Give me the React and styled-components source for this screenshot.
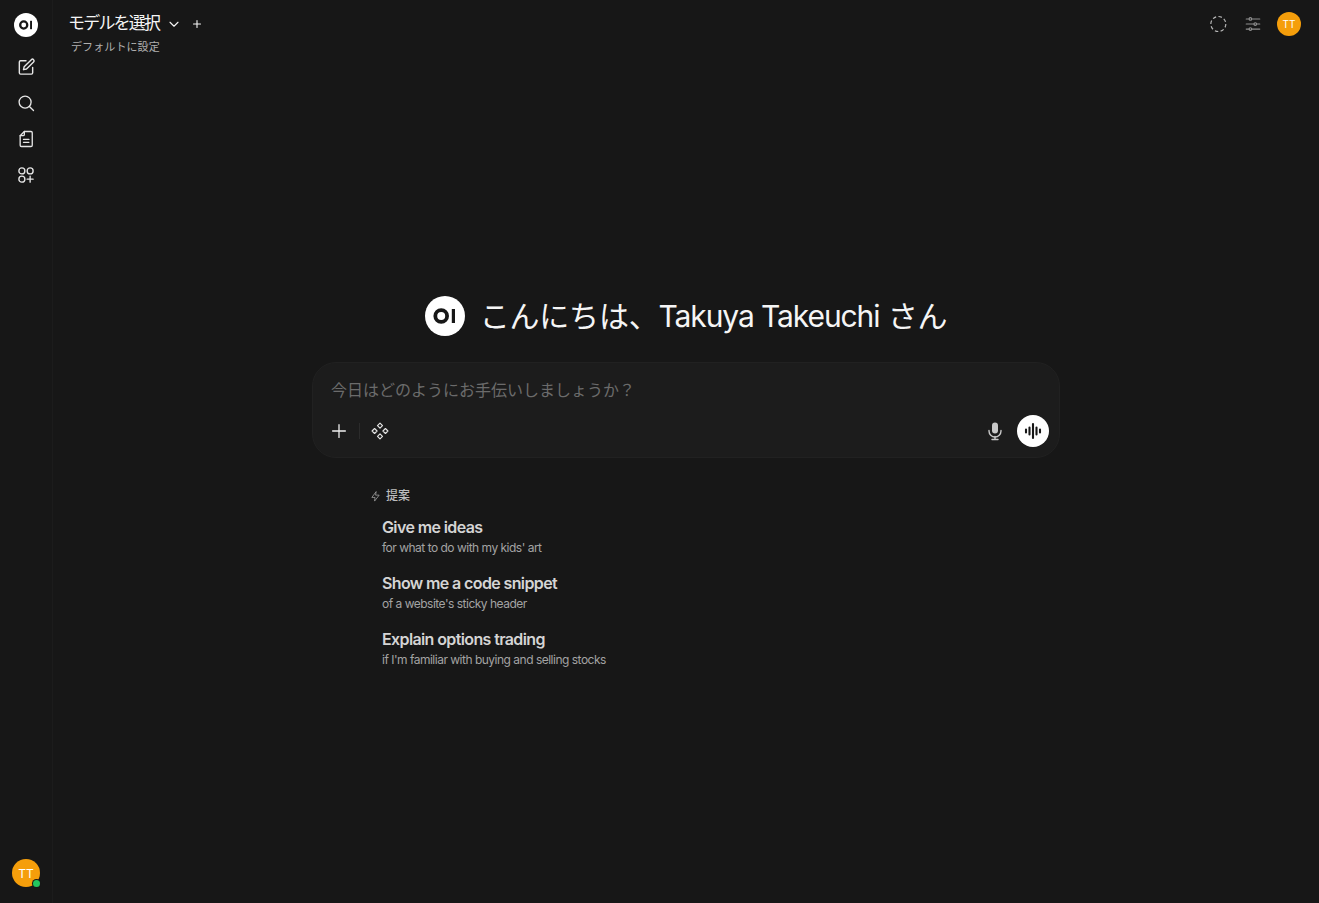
import React from 'react'
import styled, { createGlobalStyle } from 'styled-components'

const Global = createGlobalStyle`
  html, body { margin: 0; padding: 0; height: 100%; background: #171717; }
  body { font-family: Inter, "Noto Sans CJK JP", sans-serif; color: #ececec; overflow: hidden; }
  * { box-sizing: border-box; }
`

const Logo = ({ size }) => (
  <svg width={size} height={size} viewBox="0 0 40 40">
    <circle cx="20" cy="20" r="20" fill="#fff" />
    <circle cx="16.200" cy="20" r="5.900" fill="none" stroke="#171717" strokeWidth="3.800" />
    <rect x="26.800" y="13" width="3.200" height="14" fill="#171717" />
  </svg>
)

const Icon = ({ size = 18, sw = 1.5, children, color = 'currentColor' }) => (
  <svg width={size} height={size} viewBox="0 0 24 24" fill="none" stroke={color} strokeWidth={sw} strokeLinecap="round" strokeLinejoin="round">
    {children}
  </svg>
)

export default function App() {
  const suggestions = [
    ['Give me ideas', "for what to do with my kids' art"],
    ['Show me a code snippet', "of a website's sticky header"],
    ['Explain options trading', "if I'm familiar with buying and selling stocks"],
  ]
  return (
    <Page>
      <Global />
      <Sidebar>
        <SideTop>
          <SideLogo><Logo size={24} /></SideLogo>
          <SideButton>
            <Icon size={20} sw={1.700}>
              <path d="M12 4.500H5.500A1.500 1.500 0 0 0 4 6v13a1.500 1.500 0 0 0 1.500 1.500h13A1.500 1.500 0 0 0 20 19v-6.500" />
              <path d="M18.400 3.200a1.900 1.900 0 0 1 2.700 2.700L12.600 14.400 9 15.200l.8-3.600z" />
            </Icon>
          </SideButton>
          <SideButton>
            <Icon size={18} sw={1.800}>
              <circle cx="10.800" cy="10.800" r="8" />
              <path d="M16.600 16.600L22 22" />
            </Icon>
          </SideButton>
          <SideButton>
            <Icon size={20} sw={1.600}>
              <path d="M10 3h8a1.500 1.500 0 0 1 1.500 1.500v15A1.500 1.500 0 0 1 18 21H6.500A1.500 1.500 0 0 1 5 19.500V8z" />
              <path d="M10 3v3.500A1.500 1.500 0 0 1 8.500 8H5" />
              <path d="M9 12.500h6.500M9 16h6.500" />
            </Icon>
          </SideButton>
          <SideButton>
            <Icon size={18} sw={1.800}>
              <circle cx="6.500" cy="6.500" r="4" />
              <circle cx="17.500" cy="6.500" r="4" />
              <circle cx="6.500" cy="17.500" r="4" />
              <path d="M17.500 13.500v8M13.500 17.500h8" />
            </Icon>
          </SideButton>
        </SideTop>
        <SideAvatar>
          <Avatar $size={28} $font={12}>TT</Avatar>
          <OnlineDot />
        </SideAvatar>
      </Sidebar>

      <Main>
        <Navbar>
          <ModelArea>
            <ModelRow>
              <ModelName>モデルを選択</ModelName>
              <ChevronWrap>
                <Icon size={12} sw={2.200}><path d="M4 8.500l8 8 8-8" /></Icon>
              </ChevronWrap>
              <PlusWrap>
                <Icon size={12} sw={2.200}><path d="M12 5v14M5 12h14" /></Icon>
              </PlusWrap>
            </ModelRow>
            <SetDefault>デフォルトに設定</SetDefault>
          </ModelArea>
          <NavRight>
            <NavButton>
              <Icon size={20} sw={1.400} color="#b8b8b8">
                <circle cx="11.200" cy="12" r="9" strokeLinecap="butt" strokeDasharray="4.200 2.850" />
              </Icon>
            </NavButton>
            <NavButton>
              <Icon size={18} sw={1.600} color="#8f8f8f">
                <path d="M3 5.300h3.800M10.200 5.300H21M3 12h10.200M16.800 12H21M3 18.700h3.800M10.200 18.700H21" />
                <circle cx="8.500" cy="5.300" r="1.700" />
                <circle cx="15" cy="12" r="1.700" />
                <circle cx="8.500" cy="18.700" r="1.700" />
              </Icon>
            </NavButton>
            <Avatar $size={24} $font={10}>TT</Avatar>
          </NavRight>
        </Navbar>

        <Center>
          <Hero>
            <Logo size={40} />
            <Greeting>こんにちは、<Latin>Takuya Takeuchi</Latin> さん</Greeting>
          </Hero>

          <ChatBox>
            <Prompt>今日はどのようにお手伝いしましょうか？</Prompt>
            <ChatTools>
              <ToolsLeft>
                <ToolButton>
                  <Icon size={18} sw={1.700} color="#f0f0f0"><path d="M12 3.500v17M3.500 12h17" /></Icon>
                </ToolButton>
                <ToolDivider />
                <ToolButton>
                  <Icon size={20} sw={1.400} color="#e5e5e5">
                    <path d="M12 2.500l3 3-3 3-3-3z" />
                    <path d="M5.500 9l3 3-3 3-3-3z" />
                    <path d="M18.500 9l3 3-3 3-3-3z" />
                    <path d="M12 15.500l3 3-3 3-3-3z" />
                  </Icon>
                </ToolButton>
              </ToolsLeft>
              <ToolsRight>
                <MicButton>
                  <svg width="20" height="20" viewBox="0 0 20 20" fill="#c8c8c8">
                    <rect x="7" y="1.500" width="6" height="11" rx="3" />
                    <path d="M4 9.500v.5a6 6 0 0 0 12 0v-.5" fill="none" stroke="#c8c8c8" strokeWidth="1.400" strokeLinecap="round" />
                    <path d="M10 15.500v2.500M7 18.500h6" fill="none" stroke="#c8c8c8" strokeWidth="1.400" strokeLinecap="round" />
                  </svg>
                </MicButton>
                <VoiceButton>
                  <svg width="20" height="20" viewBox="0 0 20 20" stroke="#171717" strokeLinecap="round" strokeWidth="2.100">
                    <path d="M3 8.500v3M6.500 6.500v7M10 3v14M13.500 6.500v7M17 8.500v3" />
                  </svg>
                </VoiceButton>
              </ToolsRight>
            </ChatTools>
          </ChatBox>

          <Suggestions>
            <SuggestHead>
              <Icon size={11} sw={1.700} color="#a3a3a3">
                <path d="M13 2L4 14h7l-1 8 10-13h-7z" />
              </Icon>
              <SuggestLabel>提案</SuggestLabel>
            </SuggestHead>
            <SuggestList>
              {suggestions.map(([title, sub]) => (
                <SuggestItem key={title}>
                  <SuggestTitle>{title}</SuggestTitle>
                  <SuggestSub>{sub}</SuggestSub>
                </SuggestItem>
              ))}
            </SuggestList>
          </Suggestions>
        </Center>
      </Main>
    </Page>
  )
}

const Page = styled.div`
  display: flex;
  width: 100%;
  height: 100vh;
  background: #171717;
`

const Sidebar = styled.aside`
  width: 53px;
  flex-shrink: 0;
  height: 100%;
  border-right: 1px solid #1c1c1c;
  display: flex;
  flex-direction: column;
  justify-content: space-between;
  align-items: center;
  padding: 13px 0 16px;
  color: #e5e5e5;
`

const SideTop = styled.div`
  display: flex;
  flex-direction: column;
  align-items: center;
`

const SideLogo = styled.div`
  display: flex;
  height: 24px;
  margin-bottom: 12px;
`

const SideButton = styled.div`
  width: 36px;
  height: 36px;
  display: flex;
  align-items: center;
  justify-content: center;
`

const SideAvatar = styled.div`
  position: relative;
  display: flex;
`

const OnlineDot = styled.span`
  position: absolute;
  right: 0;
  bottom: 0;
  width: 7px;
  height: 7px;
  border-radius: 50%;
  background: #22c55e;
  box-shadow: 0 0 0 1px #171717;
`

const Avatar = styled.div`
  width: ${p => p.$size}px;
  height: ${p => p.$size}px;
  border-radius: 50%;
  background: #f59e0b;
  color: #fff;
  font-size: ${p => p.$font}px;
  display: flex;
  align-items: center;
  justify-content: center;
`

const Main = styled.main`
  flex: 1;
  min-width: 0;
  display: flex;
  flex-direction: column;
`

const Navbar = styled.header`
  display: flex;
  justify-content: space-between;
  align-items: flex-start;
  padding: 12px 18px 0 16px;
  height: 296px;
`

const ModelArea = styled.div`
  display: flex;
  flex-direction: column;
`

const ModelRow = styled.div`
  display: flex;
  align-items: center;
  height: 24px;
  color: #f5f5f5;
`

const ModelName = styled.div`
  margin-left: -1px;
  font-size: 17px;
  line-height: 22px;
  letter-spacing: -1.8px;
  font-weight: 400;
  padding-bottom: 2px;
`

const ChevronWrap = styled.div`
  display: flex;
  margin-left: 9px;
`

const PlusWrap = styled.div`
  display: flex;
  margin-left: 11px;
`

const SetDefault = styled.div`
  font-size: 11px;
  line-height: 16px;
  letter-spacing: 0.1px;
  color: #b0b0b0;
  margin-top: 3px;
  margin-left: 2px;
`

const NavRight = styled.div`
  display: flex;
  align-items: center;
  height: 24px;
  gap: 14px;
`

const NavButton = styled.div`
  display: flex;
  align-items: center;
  justify-content: center;
  width: 20px;
`

const Center = styled.div`
  display: flex;
  flex-direction: column;
  align-items: center;
`

const Hero = styled.div`
  display: flex;
  align-items: center;
  gap: 15px;
  height: 40px;
  margin-bottom: 26px;
`

const Greeting = styled.h1`
  margin: 0;
  padding-bottom: 4px;
  font-size: 30px;
  font-weight: 400;
  letter-spacing: -0.2px;
  color: #f5f5f5;
  white-space: nowrap;
`

const Latin = styled.span`
  letter-spacing: -1.1px;
`

const ChatBox = styled.div`
  width: 748px;
  height: 96px;
  border-radius: 24px;
  background: #1c1c1c;
  border: 1px solid #212121;
  padding: 15px 10px 10px 18px;
  display: flex;
  flex-direction: column;
  justify-content: space-between;
`

const Prompt = styled.div`
  font-size: 16px;
  line-height: 24px;
  color: #6b6b6b;
`

const ChatTools = styled.div`
  display: flex;
  justify-content: space-between;
  align-items: center;
  height: 32px;
`

const ToolsLeft = styled.div`
  display: flex;
  align-items: center;
  margin-left: -1px;
`

const ToolButton = styled.div`
  display: flex;
  align-items: center;
  justify-content: center;
  min-width: 18px;
  height: 20px;
`

const ToolDivider = styled.div`
  width: 1px;
  height: 16px;
  background: #2b2b2b;
  margin: 0 10px 0 11px;
`

const ToolsRight = styled.div`
  display: flex;
  align-items: center;
  gap: 12px;
`

const MicButton = styled.div`
  display: flex;
`

const VoiceButton = styled.div`
  width: 32px;
  height: 32px;
  border-radius: 50%;
  background: #fff;
  display: flex;
  align-items: center;
  justify-content: center;
`

const Suggestions = styled.section`
  width: 632px;
  margin-top: 30px;
`

const SuggestHead = styled.div`
  display: flex;
  align-items: center;
  gap: 5px;
  font-size: 12px;
  line-height: 16px;
  color: #bdbdbd;
`

const SuggestLabel = styled.span`
  font-weight: 500;
`

const SuggestList = styled.div`
  display: flex;
  flex-direction: column;
  gap: 8px;
  margin-top: 11px;
  padding-left: 12px;
`

const SuggestItem = styled.div`
  display: flex;
  flex-direction: column;
  height: 48px;
`

const SuggestTitle = styled.div`
  font-size: 16px;
  line-height: 24px;
  margin-bottom: 1px;
  font-weight: 600;
  letter-spacing: -0.62px;
  color: #d4d4d4;
`

const SuggestSub = styled.div`
  font-size: 12px;
  line-height: 16px;
  letter-spacing: -0.5px;
  color: #a3a3a3;
`
